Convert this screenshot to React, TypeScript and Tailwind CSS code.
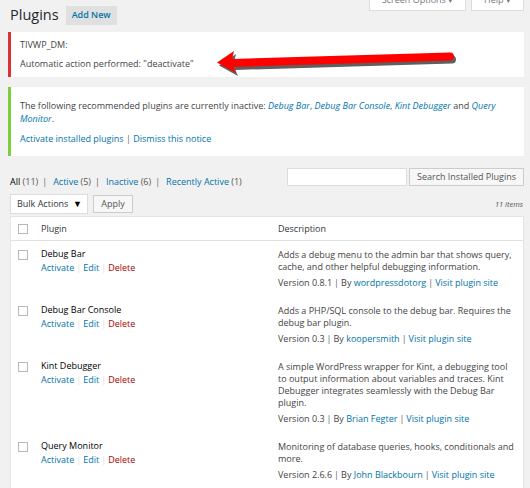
import React from "react";

type Plugin = {
  name: string;
  desc: string;
  version: string;
  author: string;
};

const plugins: Plugin[] = [
  {
    name: "Debug Bar",
    desc: "Adds a debug menu to the admin bar that shows query, cache, and other helpful debugging information.",
    version: "0.8.1",
    author: "wordpressdotorg",
  },
  {
    name: "Debug Bar Console",
    desc: "Adds a PHP/SQL console to the debug bar. Requires the debug bar plugin.",
    version: "0.3",
    author: "koopersmith",
  },
  {
    name: "Kint Debugger",
    desc: "A simple WordPress wrapper for Kint, a debugging tool to output information about variables and traces. Kint Debugger integrates seamlessly with the Debug Bar plugin.",
    version: "0.3",
    author: "Brian Fegter",
  },
  {
    name: "Query Monitor",
    desc: "Monitoring of database queries, hooks, conditionals and more.",
    version: "2.6.6",
    author: "John Blackbourn",
  },
];

const Checkbox = () => (
  <span className="block h-[10px] w-[10px] border border-[#b4b9be] bg-white" />
);

const Sep = ({ light }: { light?: boolean }) => (
  <span className={light ? "px-[2px] text-[#ddd]" : "px-[2px] text-[#666]"}>|</span>
);

const FilterSep = () => <span className="pl-[4px] pr-[6px] text-[#666]">|</span>;

const Arrow = () => (
  <svg
    className="pointer-events-none absolute left-0 top-0 overflow-visible"
    width="460"
    height="46"
    viewBox="0 0 460 46"
  >
    <g opacity="0.75" transform="translate(2 3)">
      <line x1="222" y1="31" x2="439" y2="24.5" stroke="#2a2a2a" strokeWidth="8" strokeLinecap="round" />
      <path d="M206 30.5 L223 19 Q219 30 225 41 Z" fill="#2a2a2a" />
    </g>
    <line x1="222" y1="31" x2="439" y2="24.5" stroke="#ff0000" strokeWidth="8" strokeLinecap="round" />
    <path d="M206 30.5 L223 19 Q219 30 225 41 Z" fill="#ff0000" />
  </svg>
);

export default function App() {
  return (
    <div className="min-h-screen bg-[#f1f1f1] pl-[8px] pr-[6px] font-['Open_Sans',sans-serif] text-[9px] leading-[12px] text-[#444]">
      {/* heading + screen meta tabs */}
      <div className="flex h-[32px] items-start justify-between">
        <div className="ml-[2px] mt-[5px] flex items-center gap-[7px]">
          <h1 className="text-[14.5px] leading-[20px] font-normal text-[#23282d]">Plugins</h1>
          <span className="flex h-[19px] items-center bg-[#e0e0e0] px-[6px] font-semibold text-[#0073aa]">
            Add New
          </span>
        </div>
        <div className="-mt-[11px] flex gap-[5px]">
          <span className="flex h-[22px] w-[97px] items-center justify-center border border-[#ddd] bg-white text-[#72777c]">
            Screen Options ▾
          </span>
          <span className="flex h-[22px] w-[53px] items-center justify-center border border-[#ddd] bg-white text-[#72777c]">
            Help ▾
          </span>
        </div>
      </div>

      {/* admin notice with arrow */}
      <div className="relative border-l-[3px] border-[#dc3232] bg-white py-[7px] pl-[9px] pr-[12px]">
        <p>TIVWP_DM:</p>
        <p className="mt-[7px]">Automatic action performed: "deactivate"</p>
        <Arrow />
      </div>

      {/* recommended plugins notice */}
      <div className="mt-[10px] border-l-[3px] border-[#7ad03a] bg-white pb-[11px] pl-[9px] pr-[12px] pt-[12px]">
        <p className="leading-[13px]">
          The following recommended plugins are currently inactive:{" "}
          <em className="text-[#0073aa]">Debug Bar</em>,{" "}
          <em className="text-[#0073aa]">Debug Bar Console</em>,{" "}
          <em className="text-[#0073aa]">Kint Debugger</em> and{" "}
          <em className="text-[#0073aa]">Query Monitor</em>.
        </p>
        <p className="mt-[7px] leading-[13px] text-[#0073aa]">
          Activate installed plugins <span className="text-[#666]">|</span> Dismiss this notice
        </p>
      </div>

      {/* filters + search */}
      <div className="mt-[12px] flex items-start justify-between">
        <div className="ml-[2px] mt-[8px] text-[#0073aa]">
          <span className="text-[#000]">All</span> <span className="text-[#555]">(11)</span>
          <FilterSep />
          Active <span className="text-[#555]">(5)</span>
          <FilterSep />
          Inactive <span className="text-[#555]">(6)</span>
          <FilterSep />
          Recently Active <span className="text-[#555]">(1)</span>
        </div>
        <div className="flex gap-[2px]">
          <span className="block h-[18px] w-[120px] border border-[#ddd] bg-white" />
          <span className="flex h-[18px] w-[115px] items-center justify-center border border-[#ccc] bg-[#f7f7f7] text-[#555]">
            Search Installed Plugins
          </span>
        </div>
      </div>

      {/* bulk actions */}
      <div className="ml-[2px] mt-[6px] flex items-center justify-between">
        <div className="flex items-center gap-[5px]">
          <span className="flex h-[20px] w-[78px] items-center justify-between border border-[#ddd] bg-white pl-[6px] pr-[5px] text-[#32373c]">
            Bulk Actions <span className="text-[9px] text-black">▼</span>
          </span>
          <span className="flex h-[18px] w-[40px] items-center justify-center border border-[#ccc] bg-[#f7f7f7] text-[#555]">
            Apply
          </span>
        </div>
        <span className="pr-[1px] text-[7.5px] italic text-[#555]">11 items</span>
      </div>

      {/* plugin table */}
      <div className="ml-[2px] mt-[2px] border border-[#e5e5e5] bg-white">
        <div className="grid h-[24px] grid-cols-[23px_237px_1fr] items-center border-b border-[#e1e1e1] text-[#32373c]">
          <div className="flex justify-center pl-[1px]">
            <Checkbox />
          </div>
          <div className="pl-[7px]">Plugin</div>
          <div className="pl-[7px]">Description</div>
        </div>
        {plugins.map((p) => (
          <div key={p.name} className="grid grid-cols-[23px_237px_1fr] items-start pb-[8px]">
            <div className="flex justify-center pl-[1px] pt-[9px]">
              <Checkbox />
            </div>
            <div className="pl-[7px] pt-[7px]">
              <div className="text-[#000]">{p.name}</div>
              <div className="mt-[2px]">
                <span className="text-[#0073aa]">Activate</span>
                <Sep light />
                <span className="text-[#0073aa]">Edit</span>
                <Sep light />
                <span className="text-[#a00]">Delete</span>
              </div>
            </div>
            <div className="pl-[7px] pr-[7px] pt-[8px]">
              <p>{p.desc}</p>
              <p className="mt-[4px]">
                Version {p.version}
                <Sep />
                By <span className="text-[#0073aa]">{p.author}</span>
                <Sep />
                <span className="text-[#0073aa]">Visit plugin site</span>
              </p>
            </div>
          </div>
        ))}
      </div>
    </div>
  );
}
